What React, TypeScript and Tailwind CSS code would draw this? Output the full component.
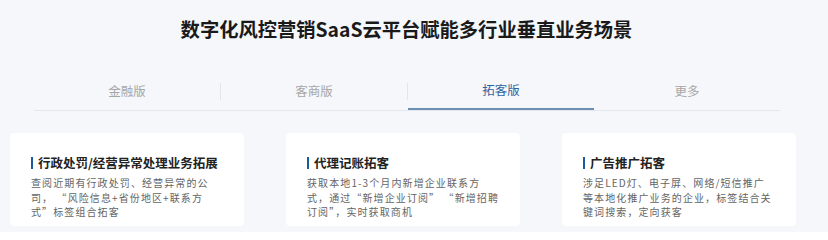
import React from 'react';

const tabs = ['金融版', '客商版', '拓客版', '更多'];

const cards = [
  {
    title: '行政处罚/经营异常处理业务拓展',
    lines: ['查阅近期有行政处罚、经营异常的公', '司， “风险信息+省份地区+联系方', '式”标签组合拓客'],
  },
  {
    title: '代理记账拓客',
    lines: ['获取本地1-3个月内新增企业联系方', '式，通过“新增企业订阅” “新增招聘', '订阅”，实时获取商机'],
  },
  {
    title: '广告推广拓客',
    lines: ['涉足LED灯、电子屏、网络/短信推广', '等本地化推广业务的企业，标签结合关', '键词搜索，定向获客'],
  },
];

export default function App() {
  const active = 2;

  return (
    <div
      className="w-[828px] h-[232px] overflow-hidden bg-[#f5f7fb]"
      style={{ fontFamily: '"Noto Sans CJK SC", "Noto Sans", sans-serif' }}
    >
      {/* heading */}
      <h2 className="pt-[15px] pr-[15px] text-center text-[19.3px] leading-[28px] font-bold text-[#1a1a1a]">
        数字化风控营销SaaS云平台赋能多行业垂直业务场景
      </h2>

      {/* tabs */}
      <div className="mt-[29px] ml-[34px] w-[746px] flex items-stretch border-b border-[#e4e8ee]">
        {tabs.map((t, i) => (
          <React.Fragment key={t}>
            {i > 0 && i < active + 1 && <div className="w-px h-[17px] self-center bg-[#e2e5ea]" />}
            <div
              className={`flex-1 h-[38px] flex items-center justify-center text-[12.5px] ${
                i === active ? 'text-[#2f63a0] border-b-2 border-[#6a8fb2] -mb-px' : 'text-[#a6a6a6]'
              }`}
            >
              {t}
            </div>
          </React.Fragment>
        ))}
      </div>

      {/* cards */}
      <div className="mt-[22px] pl-[10px] flex gap-[42px]">
        {cards.map((c) => (
          <div key={c.title} className="w-[234px] h-[93px] bg-white rounded-[4px] pl-[21px] pt-[21px]">
            <div className="flex items-center h-[18px]">
              <span className="w-[2px] h-[12px] bg-[#1c5aa0] mr-[5px]" />
              <span className="text-[12.5px] font-bold text-[#222] leading-[18px]">{c.title}</span>
            </div>
            <div className="mt-[4px] text-[10px] leading-[14.5px] tracking-[1.1px] text-[#646464]">
              {c.lines.map((l) => (
                <div key={l} className="whitespace-pre">{l}</div>
              ))}
            </div>
          </div>
        ))}
      </div>
    </div>
  );
}
